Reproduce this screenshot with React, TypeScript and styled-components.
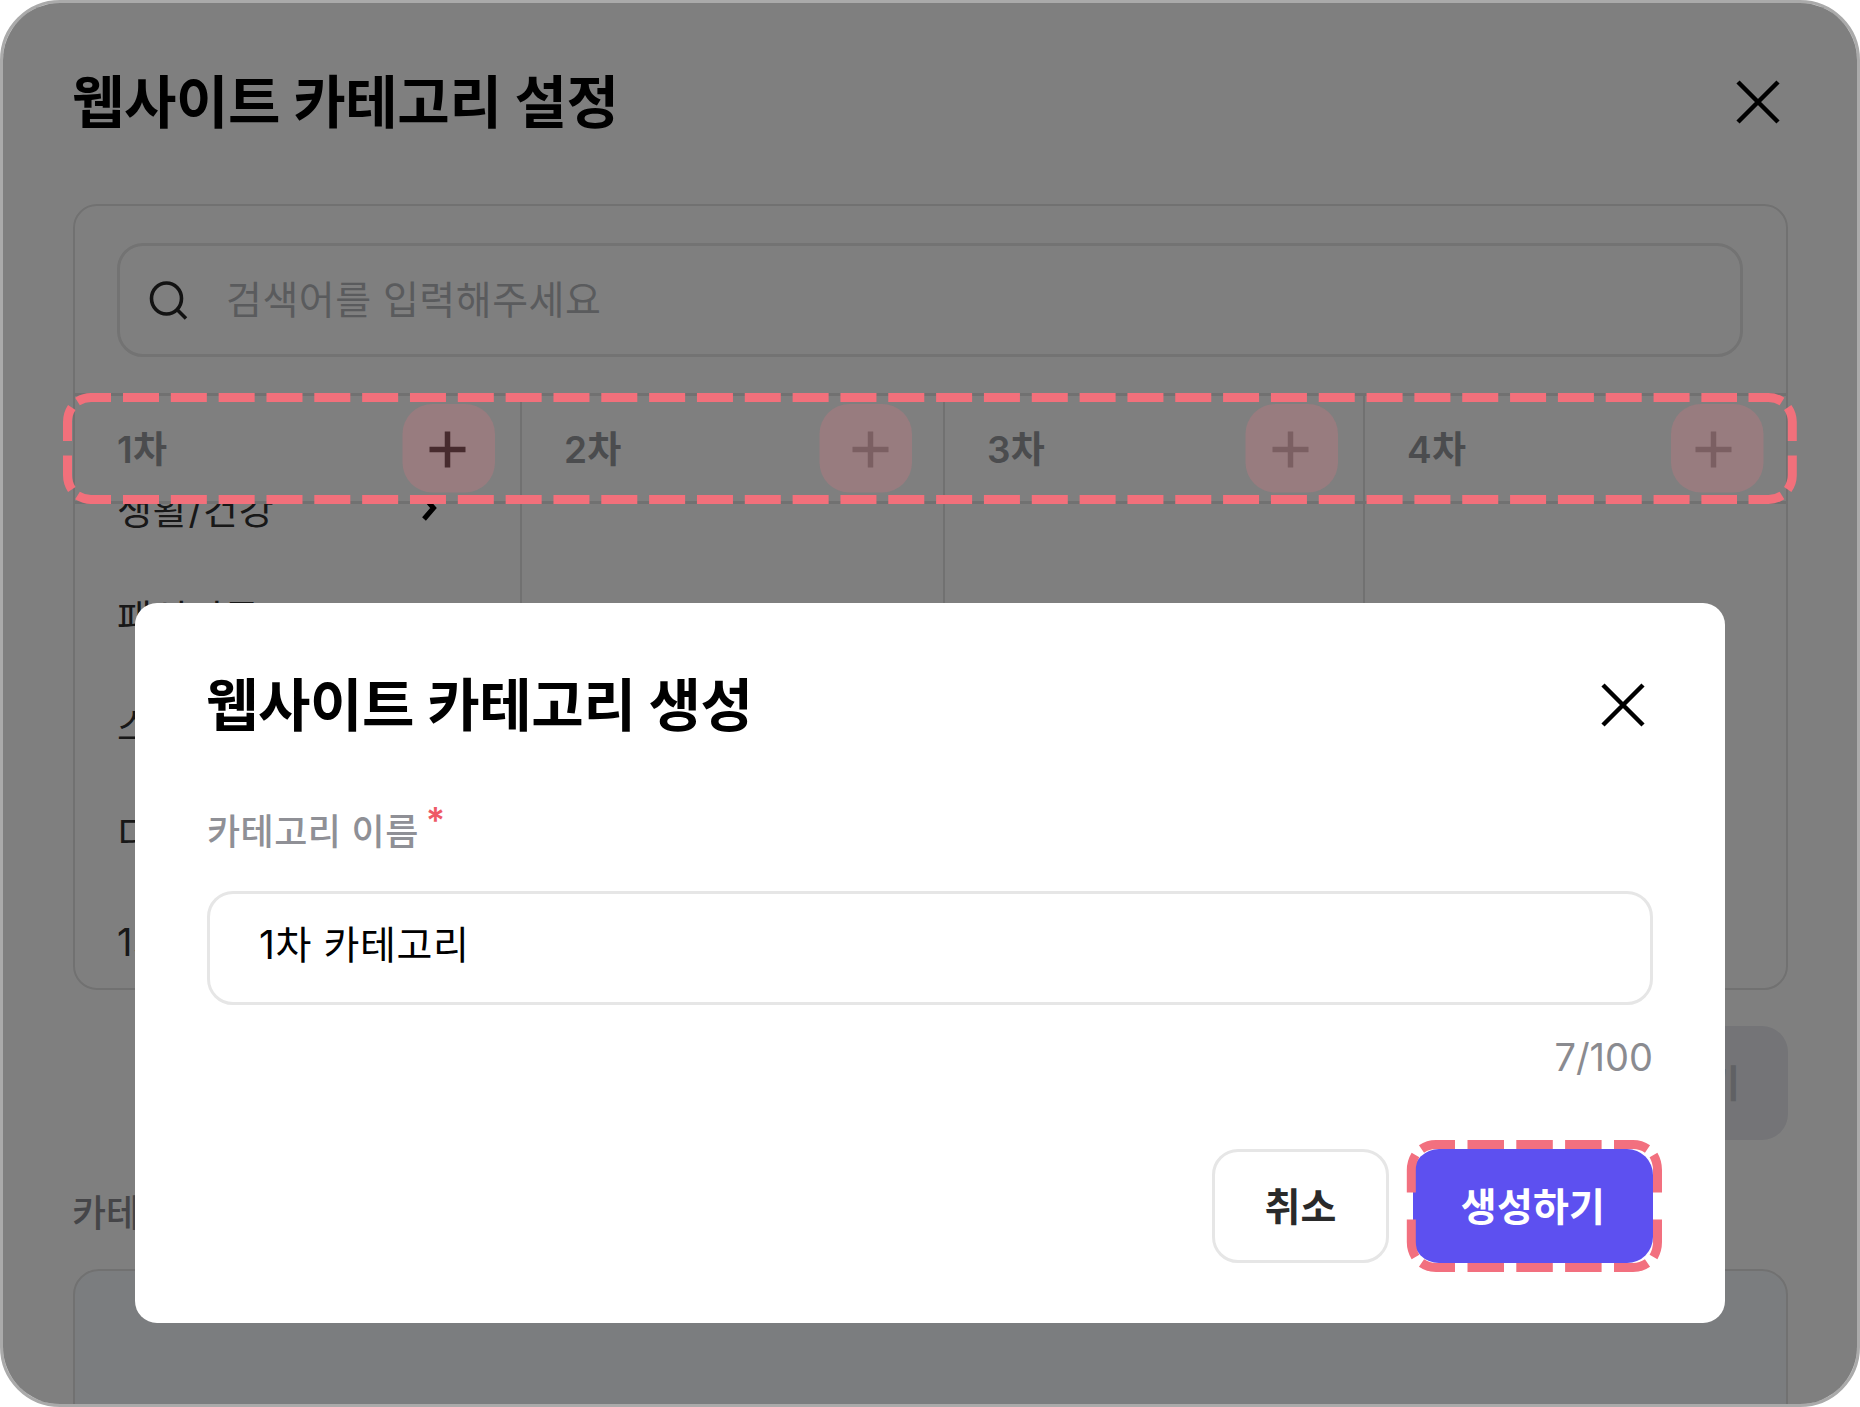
import styled, { createGlobalStyle } from "styled-components";

const GlobalStyle = createGlobalStyle`
    * {
        box-sizing: border-box;
        margin: 0;
        padding: 0;
    }
    body {
        background: #FFFFFF;
        font-family: Inter, "Noto Sans CJK KR", sans-serif;
    }
`
const Frame = styled.main`
    position: relative;
    width: 1860px;
    height: 1407px;
    border: 3px solid #AAAAAA;
    border-radius: 60px;
    background: #FFFFFF;
    overflow: hidden;
`
const Page = styled.div`
    height: 1401px;
    padding: 0 69px 0 70px;
    overflow: hidden;
`
const Header = styled.header`
    display: flex;
    align-items: center;
    justify-content: space-between;
    height: 198px;
    padding-right: 8px;
`
const Title = styled.h1`
    margin: 1px 0 0 -1px;
    font-weight: 700;
    font-size: 57px;
    line-height: 64px;
    letter-spacing: -0.4px;
    white-space: nowrap;
    color: #000000;
`
const CategoryPanel = styled.section`
    height: 786px;
    margin-top: 3px;
    border: 2px solid #E2E2E2;
    border-radius: 24px;
    overflow: hidden;
`
const SearchBox = styled.div`
    display: flex;
    align-items: center;
    gap: 38px;
    width: 1626px;
    height: 114px;
    margin: 37px 42px 36px;
    padding-left: 29px;
    border: 3px solid #E6E6E6;
    border-radius: 26px;
`
const Placeholder = styled.span`
    font-size: 39px;
    line-height: 48px;
    letter-spacing: 0.5px;
    color: #B5B7BB;
`
const Columns = styled.div`
    display: grid;
    grid-template-columns: 447px 423px 420px 1fr;
    height: 600px;
`
const Column = styled.div`
    border-right: 2.5px solid #E2E2E2;
    &:last-child {
        border-right: none;
    }
`
const ColumnHead = styled.div`
    display: flex;
    align-items: center;
    justify-content: space-between;
    height: 111px;
    padding: 2px 54px 0 42px;
    border-top: 3px solid #E2E2E2;
    border-bottom: 3px solid #E2E2E2;
`
const ColumnName = styled.span`
    font-weight: 600;
    font-size: 37px;
    line-height: 48px;
    letter-spacing: 0.3px;
    color: #96989D;
`
const ItemList = styled.ul`
    height: 485px;
    list-style: none;
    overflow: hidden;
`
const Item = styled.li`
    display: flex;
    align-items: center;
    justify-content: space-between;
    height: 108px;
    padding: 0 82px 0 42px;
    font-size: 38px;
    letter-spacing: 0.8px;
    color: #303030;
    &:first-child {
        margin-top: -51px;
    }
`
const PageActions = styled.div`
    display: flex;
    justify-content: flex-end;
    padding-top: 36px;
`
const AddButton = styled.button`
    height: 114px;
    padding: 0 48px 6px;
    border: none;
    border-radius: 26px;
    background: #E8E9EE;
    font-family: inherit;
    font-weight: 700;
    font-size: 38px;
    color: #C0C2C8;
`
const PathLabel = styled.p`
    margin: 50px 0 0 -1px;
    font-weight: 500;
    font-size: 37px;
    line-height: 48px;
    color: #8A8B90;
`
const PathBox = styled.div`
    height: 200px;
    margin-top: 31px;
    border: 2.5px solid #E2E2E2;
    border-radius: 26px;
    background: #F6FBFF;
`
const Overlay = styled.div`
    position: absolute;
    inset: 0;
    background: rgba(0, 0, 0, 0.5);
`
const Marks = styled.svg`
    position: absolute;
    left: -3px;
    top: -3px;
`
const Modal = styled.section`
    position: absolute;
    left: 132px;
    top: 600px;
    width: 1590px;
    height: 720px;
    padding: 0 72px;
    border-radius: 22px;
    background: #FFFFFF;
`
const ModalHeader = styled.div`
    display: flex;
    align-items: center;
    justify-content: space-between;
    height: 204px;
    padding-right: 8px;
`
const Label = styled.label`
    display: flex;
    gap: 7px;
    height: 48px;
    margin-top: 1px;
    font-weight: 500;
    font-size: 36px;
    line-height: 48px;
    letter-spacing: 0.5px;
    color: #8F9096;
`
const Required = styled.span`
    font-weight: 600;
    font-size: 36px;
    line-height: 24px;
    color: #EE5A66;
`
const NameField = styled.div`
    display: flex;
    align-items: center;
    height: 114px;
    margin-top: 35px;
    padding: 0 0 12px 49px;
    border: 3px solid #E6E6E6;
    border-radius: 26px;
    font-size: 39px;
    letter-spacing: 0.6px;
    color: #000000;
`
const Counter = styled.p`
    margin-top: 28px;
    font-size: 38px;
    line-height: 48px;
    text-align: right;
    color: #8A8B90;
`
const ModalActions = styled.div`
    display: flex;
    justify-content: flex-end;
    gap: 24px;
    margin-top: 68px;
`
const Button = styled.button<{ $primary?: boolean }>`
    width: ${(props) => (props.$primary ? 240 : 177)}px;
    height: 114px;
    padding-bottom: 5px;
    border: ${(props) => (props.$primary ? "none" : "3px solid #E6E6E6")};
    border-radius: 26px;
    background: ${(props) => (props.$primary ? "#5D50F0" : "#FFFFFF")};
    font-family: inherit;
    font-weight: 700;
    font-size: 39px;
    letter-spacing: 0.2px;
    color: ${(props) => (props.$primary ? "#FFFFFF" : "#2A2A2A")};
`

const columns = [
    { name: "1차", color: "#303030" },
    { name: "2차", color: "#B4B4B4" },
    { name: "3차", color: "#B4B4B4" },
    { name: "4차", color: "#B4B4B4" },
];

const items = ["생활/건강", "패션의류", "스포츠", "디지털", "1차"];

const CloseIcon = () => (
    <svg width="44" height="44" viewBox="0 0 44 44" fill="none" stroke="#000000" strokeWidth="4.5">
        <path d="M2 2L42 42M42 2L2 42"/>
    </svg>
);

const SearchIcon = () => (
    <svg width="39" height="39" viewBox="0 0 39 39" fill="none" stroke="#262626" strokeWidth="3.6">
        <ellipse cx="17.5" cy="17.5" rx="15" ry="15.5"/>
        <path d="M28 28.5L37 37.5"/>
    </svg>
);

const PlusIcon = ({ color }: { color: string }) => (
    <svg width="37" height="37" viewBox="0 0 37 37" stroke={color} strokeWidth="5.5">
        <path d="M18.5 0.5V36.5M0.5 18.5H36.5"/>
    </svg>
);

const ChevronIcon = () => (
    <svg width="16" height="28" viewBox="0 0 16 28" fill="none" stroke="#000000" strokeWidth="5">
        <path d="M2 4L11.5 15L2 26"/>
    </svg>
);

export default function App() {
    return (
        <>
            <GlobalStyle/>
            <Frame>
                <Page>
                    <Header>
                        <Title>웹사이트 카테고리 설정</Title>
                        <CloseIcon/>
                    </Header>
                    <CategoryPanel>
                        <SearchBox>
                            <SearchIcon/>
                            <Placeholder>검색어를 입력해주세요</Placeholder>
                        </SearchBox>
                        <Columns>
                            {columns.map((column, index) => (
                                <Column key={column.name}>
                                    <ColumnHead>
                                        <ColumnName>{column.name}</ColumnName>
                                        <PlusIcon color={column.color}/>
                                    </ColumnHead>
                                    {index === 0 && (
                                        <ItemList>
                                            {items.map((item) => (
                                                <Item key={item}>
                                                    {item}
                                                    <ChevronIcon/>
                                                </Item>
                                            ))}
                                        </ItemList>
                                    )}
                                </Column>
                            ))}
                        </Columns>
                    </CategoryPanel>
                    <PageActions>
                        <AddButton>추가하기</AddButton>
                    </PageActions>
                    <PathLabel>카테고리</PathLabel>
                    <PathBox/>
                </Page>
                <Overlay/>
                {/* guide marks around the column heads */}
                <Marks width="1860" height="560" fill="none">
                    <g fill="#F2707F" fillOpacity="0.22">
                        <rect x="402.5" y="404" width="92.5" height="88.5" rx="30"/>
                        <rect x="819.5" y="404" width="92.5" height="88.5" rx="30"/>
                        <rect x="1245.5" y="404" width="92.5" height="88.5" rx="30"/>
                        <rect x="1671" y="404" width="92.5" height="88.5" rx="30"/>
                    </g>
                    <g stroke="#F2707B" strokeWidth="9">
                        <path d="M123 397.5H1737" strokeDasharray="36 11.83"/>
                        <path d="M123 499.5H1737" strokeDasharray="36 11.83"/>
                        <path d="M111 397.5H91Q84 397.5 77.5 401.5M71.8 407.5Q67.5 414 67.5 422V441"/>
                        <path d="M111 499.5H91Q84 499.5 77.5 495.5M71.8 489.5Q67.5 483 67.5 475V455.5"/>
                        <path d="M1748.5 397.5H1768.5Q1775.5 397.5 1782 401.5M1787.7 407.5Q1792.3 414 1792.3 422V441"/>
                        <path d="M1748.5 499.5H1768.5Q1775.5 499.5 1782 495.5M1787.7 489.5Q1792.3 483 1792.3 475V455.5"/>
                    </g>
                </Marks>
                <Modal>
                    <ModalHeader>
                        <Title as="h2">웹사이트 카테고리 생성</Title>
                        <CloseIcon/>
                    </ModalHeader>
                    <Label>
                        카테고리 이름
                        <Required>*</Required>
                    </Label>
                    <NameField>1차 카테고리</NameField>
                    <Counter>7/100</Counter>
                    <ModalActions>
                        <Button>취소</Button>
                        <Button $primary>생성하기</Button>
                    </ModalActions>
                </Modal>
                {/* guide mark around the submit button */}
                <Marks width="1860" height="1404" fill="none" stroke="#F2707F" strokeWidth="9">
                    <path d="M1467.5 1144.5H1602" strokeDasharray="36.5 12.3"/>
                    <path d="M1467.5 1267.5H1602" strokeDasharray="36.5 12.3"/>
                    <path d="M1455 1144.5H1436Q1428 1144.5 1421.5 1149M1415.5 1155Q1411.3 1162 1411.3 1170V1192.5"/>
                    <path d="M1455 1267.5H1436Q1428 1267.5 1421.5 1263M1415.5 1257Q1411.3 1250 1411.3 1242V1219.5"/>
                    <path d="M1614 1144.5H1633Q1641 1144.5 1647.5 1149M1653.5 1155Q1657.5 1162 1657.5 1170V1192.5"/>
                    <path d="M1614 1267.5H1633Q1641 1267.5 1647.5 1263M1653.5 1257Q1657.5 1250 1657.5 1242V1219.5"/>
                </Marks>
            </Frame>
        </>
    );
}
